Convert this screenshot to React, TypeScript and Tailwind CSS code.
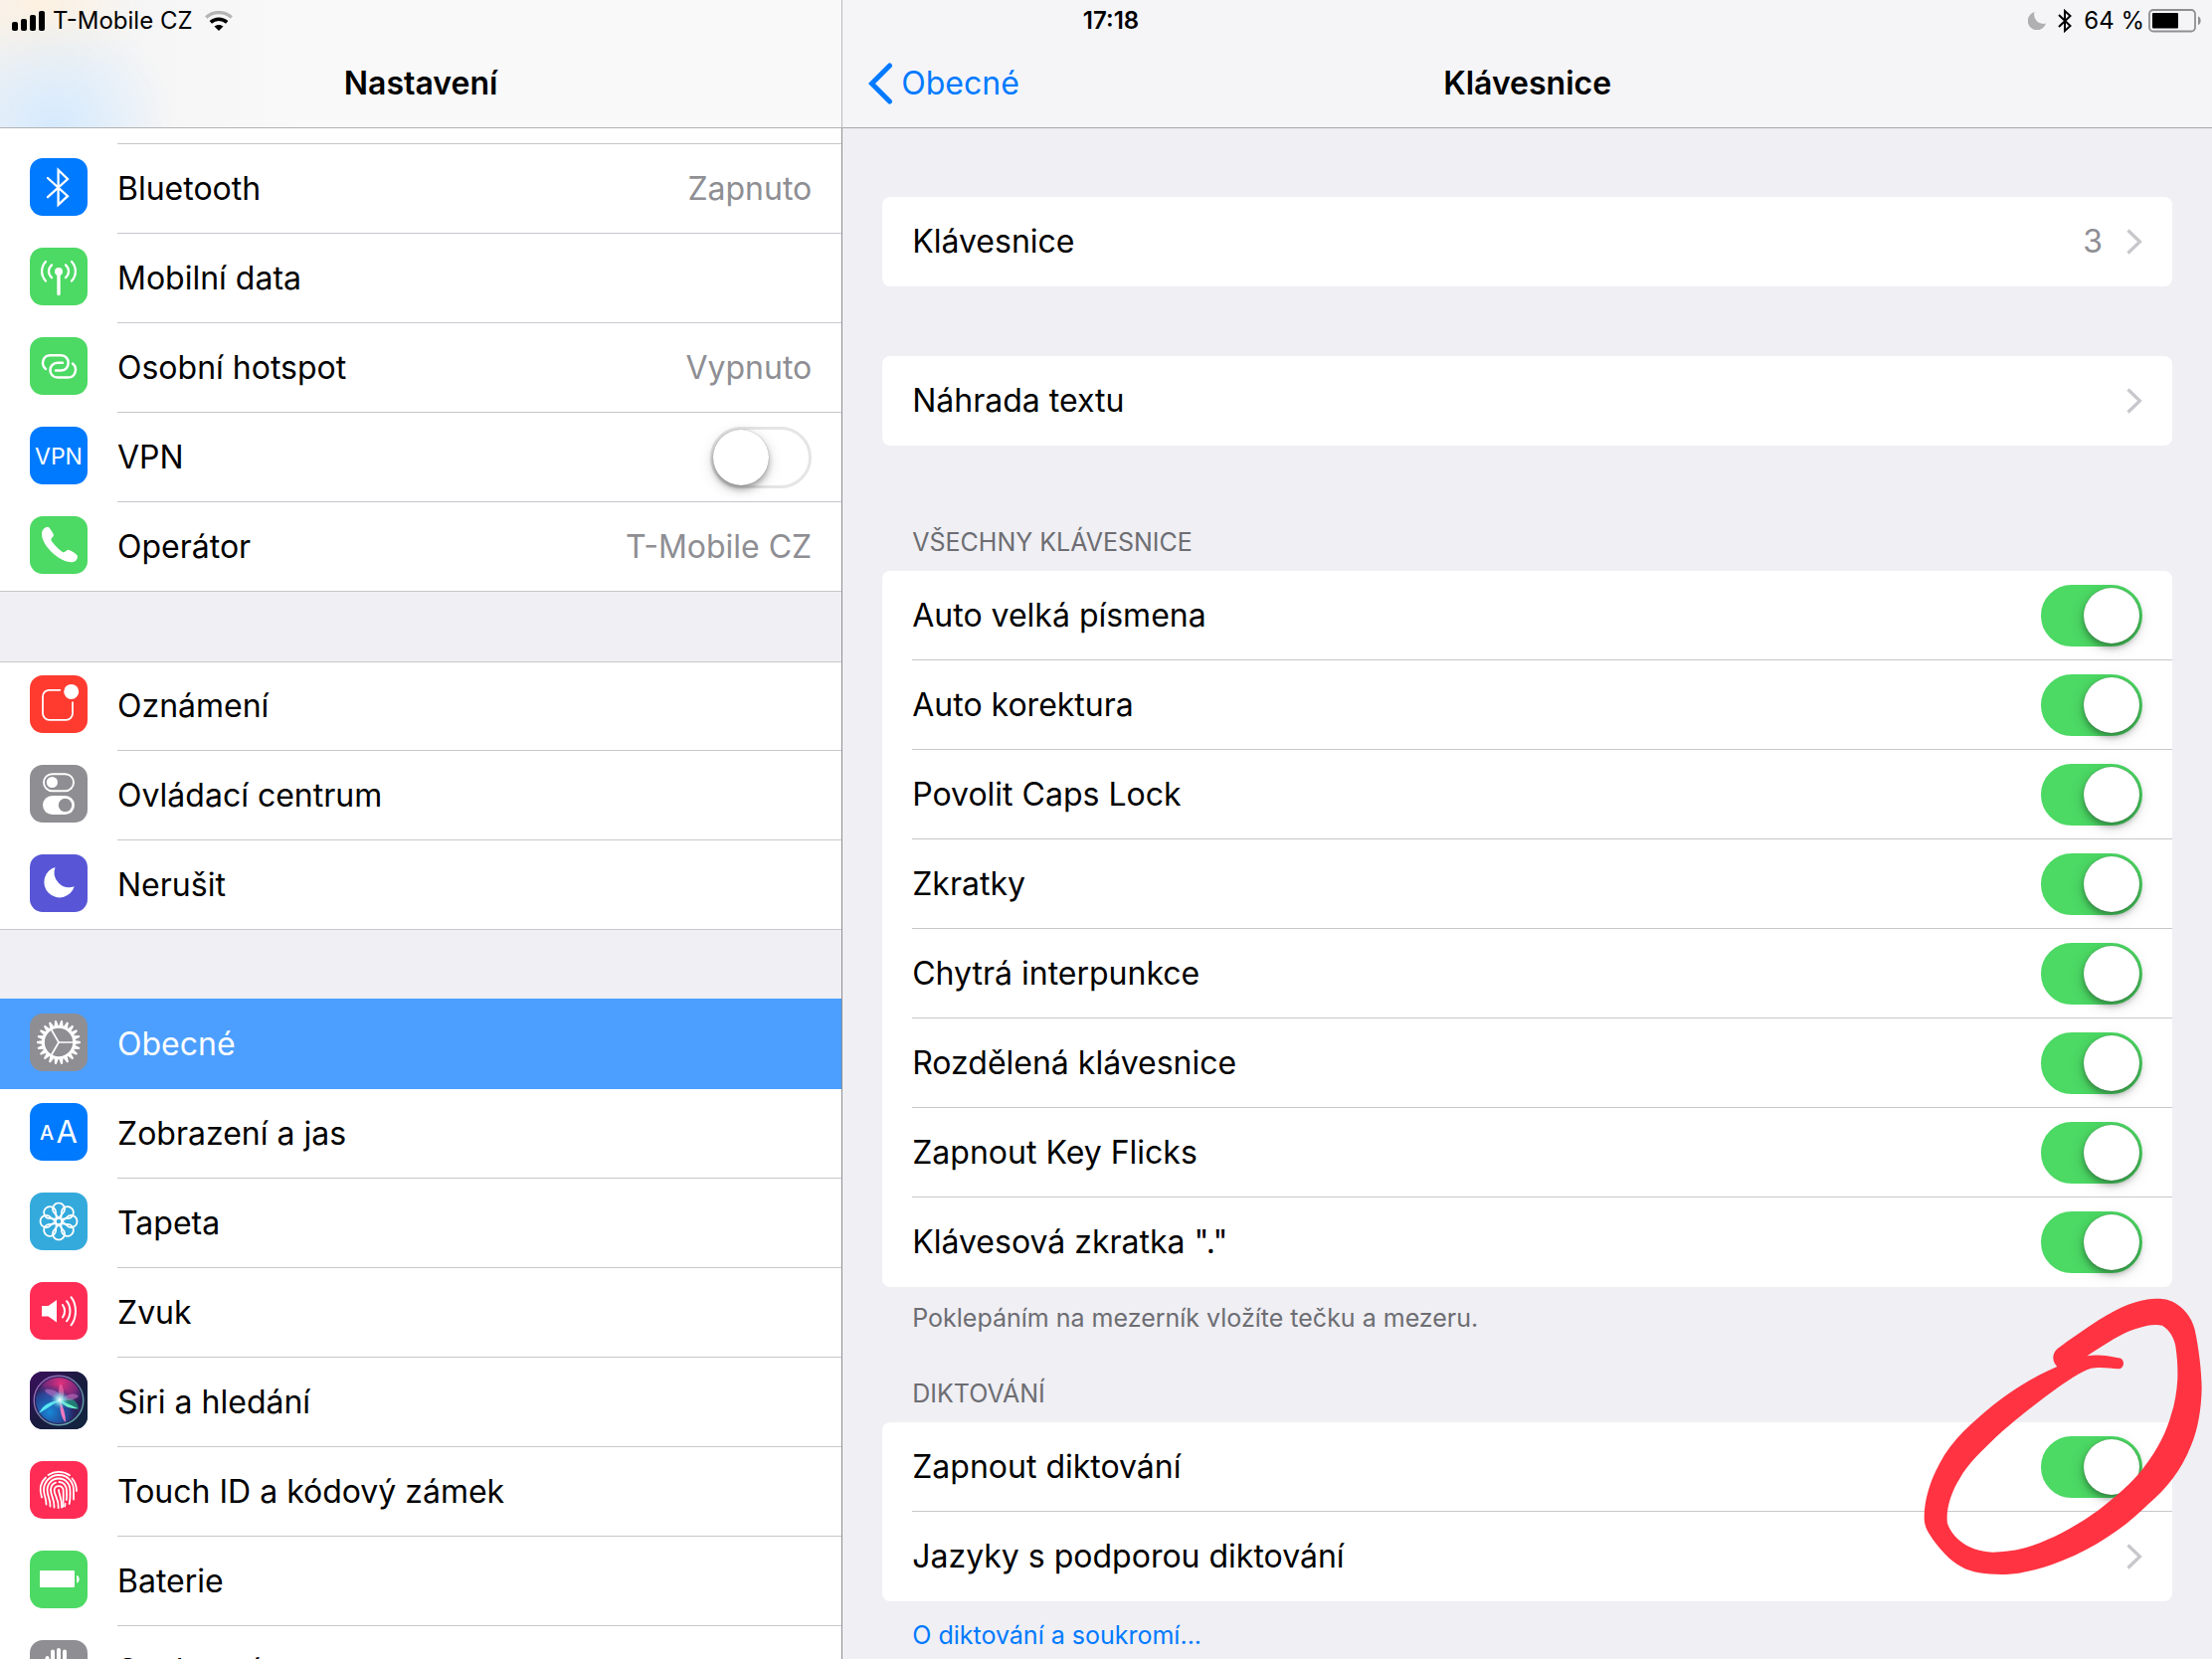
import React from 'react';

interface SidebarItem {
  id: string;
  label: string;
  tile: string;
  icon: React.ReactNode;
  value?: string;
  toggle?: boolean;
  selected?: boolean;
}

interface ToggleItem {
  id: string;
  label: string;
}

const petalAngles = [0, 45, 90, 135, 180, 225, 270, 315];
const gearTeeth = Array.from({ length: 22 }, (_, i) => (i * 360) / 22);

const BluetoothIcon = () => (
  <path d="M18 20 38 38.2 28.6 46.8V12L38 21 18 39.2" fill="none" stroke="white" strokeWidth="2.3" strokeLinecap="round" />
);

const CellularIcon = () => (
  <g fill="none" stroke="white" strokeWidth="2.3" strokeLinecap="round">
    <circle cx="29" cy="24" r="4" fill="white" stroke="none" />
    <path d="M29 25v21.5" strokeWidth="3.4" />
    <path d="M22 17.4c-4 3.8-4 9 0 12.8M36 17.4c4 3.8 4 9 0 12.8" />
    <path d="M16 14c-5.2 5.8-5.2 13.8 0 19.6M42 14c5.2 5.8 5.2 13.8 0 19.6" />
  </g>
);

const HotspotIcon = () => (
  <g fill="none" stroke="white" strokeWidth="2.5" strokeLinecap="round">
    <path d="M16 32C10.600 27.500 13 18.300 20.500 18.300H31.500C41 18.300 41 33.500 31.500 33.500H26" />
    <path d="M43 26.500C48.400 31 46 40.600 38.500 40.600H28C18 40.600 18 25.800 28 25.800H33" />
  </g>
);

const VpnIcon = () => (
  <text x="29" y="38" textAnchor="middle" fontSize="23" fill="white">VPN</text>
);

const PhoneIcon = () => (
  <path
    fill="white"
    d="M12 18c0-4.500 3-7 6.200-7.200 1.300 0 5.800 7 5.800 8.300 0 1.600-2.600 2.700-2.600 4.600 0 2.100 10.500 12.600 12.600 12.600 1.900 0 2.800-2.500 4.500-2.500 1.600 0 9.500 4.600 9.500 6.400 0 3.200-2 6.100-6.300 6.100C30.500 46.300 12 30 12 18Z"
  />
);

const NotificationsIcon = () => (
  <g>
    <path
      d="M31 14.800H19.500a6.500 6.500 0 0 0-6.500 6.500v17a6.500 6.500 0 0 0 6.500 6.500h17a6.500 6.500 0 0 0 6.500-6.500V26.500"
      fill="none"
      stroke="white"
      strokeWidth="1.800"
    />
    <circle cx="41.700" cy="16.400" r="7.500" fill="white" />
  </g>
);

const ControlCenterIcon = () => (
  <g>
    <rect x="14" y="9.200" width="30" height="17" rx="8.500" fill="none" stroke="white" strokeWidth="1.900" />
    <circle cx="22.400" cy="17.500" r="5.600" fill="white" />
    <rect x="13" y="31" width="32" height="19" rx="9.500" fill="white" />
    <circle cx="35.500" cy="40.500" r="6.700" fill="#8e8e93" />
  </g>
);

const MoonIcon = () => (
  <path d="M25.500 13A15.500 15.500 0 1 0 44.700 32.300 15 15 0 0 1 25.500 13Z" fill="white" />
);

const GearIcon = () => (
  <g fill="none" stroke="white">
    <circle cx="29" cy="29" r="15.600" strokeWidth="2.900" />
    <path d="M29 29H44M29 29 21.500 16M29 29 21.500 42" strokeWidth="1.700" />
    {gearTeeth.map((angle) => (
      <path key={angle} d="M45.500 26.900 51 28.100v1.800l-5.500 1.200Z" fill="white" stroke="none" transform={`rotate(${angle} 29 29)`} />
    ))}
  </g>
);

const DisplayIcon = () => (
  <g fill="white">
    <text x="10" y="36.500" fontSize="20" fontWeight="500">A</text>
    <text x="26.500" y="40" fontSize="31">A</text>
  </g>
);

const WallpaperIcon = () => (
  <g fill="none" stroke="white" strokeWidth="1.700" strokeLinejoin="round">
    <circle cx="29" cy="29" r="3.200" />
    {petalAngles.map((angle) => (
      <path key={angle} d="M29 25.800 23.800 19.500A6 6 0 1 1 34.200 19.500Z" transform={`rotate(${angle} 29 29)`} />
    ))}
  </g>
);

const SoundIcon = () => (
  <g>
    <path d="M12 24h6.500l8.500-6v22.500l-8.500-6H12Z" fill="white" />
    <path
      d="M33 23c2.700 3.500 2.700 9 0 12.500M37 19.200c4.600 5.500 4.600 14.600 0 20.100M41.500 15.200c6 7.700 6 20.400 0 28.100"
      fill="none"
      stroke="white"
      strokeWidth="2"
      strokeLinecap="round"
    />
  </g>
);

const SiriIcon = () => (
  <g>
    <defs>
      <linearGradient id="siri-tile" x1="0" y1="0" x2="1" y2="1">
        <stop offset="0" stopColor="#3d0f5c" />
        <stop offset="0.5" stopColor="#191b3f" />
        <stop offset="1" stopColor="#12263f" />
      </linearGradient>
      <linearGradient id="siri-ring" x1="0" y1="0" x2="1" y2="1">
        <stop offset="0" stopColor="#a85ac0" />
        <stop offset="0.5" stopColor="#6f7fa8" />
        <stop offset="1" stopColor="#5cb8b0" />
      </linearGradient>
      <radialGradient id="siri-pink" cx="0.55" cy="0.12" r="0.6">
        <stop offset="0" stopColor="#e0307c" />
        <stop offset="0.6" stopColor="#8f2a86" stopOpacity="0.8" />
        <stop offset="1" stopColor="#3a2370" stopOpacity="0" />
      </radialGradient>
      <radialGradient id="siri-blue" cx="0.3" cy="0.75" r="0.6">
        <stop offset="0" stopColor="#168ad8" />
        <stop offset="0.7" stopColor="#2350a8" stopOpacity="0.7" />
        <stop offset="1" stopColor="#202860" stopOpacity="0" />
      </radialGradient>
      <radialGradient id="siri-glow">
        <stop offset="0" stopColor="#ffffff" />
        <stop offset="0.35" stopColor="#9ff4f4" stopOpacity="0.8" />
        <stop offset="1" stopColor="#40c0e0" stopOpacity="0" />
      </radialGradient>
    </defs>
    <rect width="58" height="58" fill="url(#siri-tile)" />
    <circle cx="29" cy="29" r="24" fill="#2a2158" />
    <circle cx="29" cy="29" r="23" fill="url(#siri-pink)" />
    <circle cx="29" cy="29" r="23" fill="url(#siri-blue)" />
    <path d="M30 28C40 24 48 28 49 38 42 37 34 34 30 28Z" fill="#1e9a7c" opacity="0.75" />
    <path d="M29 28C20 24 13 20 16 18c8-1 14 4 17 8 6-4 14-5 16-1-4 4-12 5-20 3Z" fill="#c77ac8" opacity="0.55" />
    <path d="M31 12c4 6 4 12 1 17-4-4-4-11-1-17Z" fill="#f06aa8" opacity="0.7" />
    <path d="M30 29c4 7 6 14 6 22-4-3-6-12-6-22Z" fill="#f07ac0" />
    <path d="M31 29C24 32 16 38 9 42c4-8 12-13 22-13Z" fill="#58e8f4" />
    <path d="M29 28c6 3 13 6 19 9-7 1-14-2-19-9Z" fill="#6cf0c8" />
    <circle cx="30" cy="28.500" r="9" fill="url(#siri-glow)" />
    <circle cx="29" cy="29" r="24.800" fill="none" stroke="url(#siri-ring)" strokeWidth="1.400" />
  </g>
);

const TouchIdIcon = () => (
  <g fill="none" stroke="white" strokeWidth="1.800" strokeLinecap="round">
    <path d="M18.500 14C25 9.700 33.500 9.700 40 14.200" />
    <path d="M12 36.500C9.500 29 10.500 21.500 16 16.500M42.500 17.500c3 3.500 4.500 8 4.500 12.500" />
    <path d="M16.500 43.500C16.800 38 14 35 14 29c0-8 6.500-15 15-15 9.500 0 15 7.500 15 15.500v9" />
    <path d="M20.500 45.500C21 39 17.500 35.500 17.500 29c0-6.500 5-11.500 11.500-11.500 7 0 11.500 5.500 11.500 12.500 0 4 .5 8-.8 13" />
    <path d="M24.500 46.500c.5-8-3.500-11.500-3.500-17.500 0-3.500 2-6.300 5-7.400M29.500 21c4.500 0 7.500 4 7.500 9 0 3 .3 6-.2 9" />
    <path d="M28.700 47c.6-9-4.200-12.500-4.200-18a4.600 4.600 0 0 1 9.100 0c0 5 .6 11-.6 17" />
    <path d="M29 29c0 4.500 3.500 8 3 17.500M35.500 43l-.4 2.500" />
  </g>
);

const BatteryIcon = () => (
  <g fill="white">
    <rect x="10" y="20" width="35" height="17" rx="1" />
    <path d="M47 25c3.500 0 3.500 7.500 0 7.500Z" />
  </g>
);

const PrivacyIcon = () => (
  <path
    d="M17.500 18v20M23 11.500V34M29 10v24M35 11.500V34M23 34h12v8H23ZM41 30l-5 10"
    fill="none"
    stroke="white"
    strokeWidth="4"
    strokeLinecap="round"
  />
);

const sidebarGroups: SidebarItem[][] = [
  [
    { id: 'bluetooth', label: 'Bluetooth', tile: 'bg-[#007aff]', icon: <BluetoothIcon />, value: 'Zapnuto' },
    { id: 'cellular', label: 'Mobilní data', tile: 'bg-[#4cd964]', icon: <CellularIcon /> },
    { id: 'hotspot', label: 'Osobní hotspot', tile: 'bg-[#4cd964]', icon: <HotspotIcon />, value: 'Vypnuto' },
    { id: 'vpn', label: 'VPN', tile: 'bg-[#007aff]', icon: <VpnIcon />, toggle: true },
    { id: 'carrier', label: 'Operátor', tile: 'bg-[#4cd964]', icon: <PhoneIcon />, value: 'T-Mobile CZ' },
  ],
  [
    { id: 'notifications', label: 'Oznámení', tile: 'bg-[#ff3b30]', icon: <NotificationsIcon /> },
    { id: 'control-center', label: 'Ovládací centrum', tile: 'bg-[#8e8e93]', icon: <ControlCenterIcon /> },
    { id: 'dnd', label: 'Nerušit', tile: 'bg-[#5856d6]', icon: <MoonIcon /> },
  ],
  [
    { id: 'general', label: 'Obecné', tile: 'bg-[#8e8e93]', icon: <GearIcon />, selected: true },
    { id: 'display', label: 'Zobrazení a jas', tile: 'bg-[#007aff]', icon: <DisplayIcon /> },
    { id: 'wallpaper', label: 'Tapeta', tile: 'bg-[#34aadc]', icon: <WallpaperIcon /> },
    { id: 'sound', label: 'Zvuk', tile: 'bg-[#ff2d55]', icon: <SoundIcon /> },
    { id: 'siri', label: 'Siri a hledání', tile: 'bg-[#191b3f]', icon: <SiriIcon /> },
    { id: 'touch-id', label: 'Touch ID a kódový zámek', tile: 'bg-[#ff2d55]', icon: <TouchIdIcon /> },
    { id: 'battery', label: 'Baterie', tile: 'bg-[#4cd964]', icon: <BatteryIcon /> },
    { id: 'privacy', label: 'Soukromí', tile: 'bg-[#8e8e93]', icon: <PrivacyIcon /> },
  ],
];

const keyboardToggles: ToggleItem[] = [
  { id: 'auto-caps', label: 'Auto velká písmena' },
  { id: 'auto-correct', label: 'Auto korektura' },
  { id: 'caps-lock', label: 'Povolit Caps Lock' },
  { id: 'shortcuts', label: 'Zkratky' },
  { id: 'smart-punctuation', label: 'Chytrá interpunkce' },
  { id: 'split-keyboard', label: 'Rozdělená klávesnice' },
  { id: 'key-flicks', label: 'Zapnout Key Flicks' },
  { id: 'dot-shortcut', label: 'Klávesová zkratka "."' },
];

const Switch: React.FC<{ id: string; defaultChecked?: boolean }> = ({ id, defaultChecked }) => (
  <input
    id={id}
    type="checkbox"
    role="switch"
    defaultChecked={defaultChecked}
    className="h-[62px] w-[102px] shrink-0 cursor-pointer appearance-none rounded-full border-[3px] border-[#e5e5e5] bg-white before:block before:size-14 before:rounded-full before:bg-white before:shadow-[0_4px_6px_rgba(0,0,0,0.3),0_4px_16px_rgba(0,0,0,0.15),0_0_1px_rgba(0,0,0,0.4)] before:content-[''] checked:border-[#4cd964] checked:bg-[#4cd964] checked:before:ml-10"
  />
);

const Chevron = () => (
  <svg width="16" height="26" viewBox="0 0 16 26" fill="none" stroke="#c7c7cc" strokeWidth="3.200" aria-hidden="true">
    <path d="M1.500 1.500 13.500 13 1.500 24.500" />
  </svg>
);

const SidebarRow: React.FC<{ item: SidebarItem; last: boolean }> = ({ item, last }) => {
  const content = (
    <>
      <span className={`mt-[14px] block size-[58px] shrink-0 self-start overflow-hidden rounded-[13px] ${item.tile}`}>
        <svg viewBox="0 0 58 58" className="size-full" aria-hidden="true">{item.icon}</svg>
      </span>
      <span
        className={`flex flex-1 items-center justify-between self-stretch pr-[30px] ${
          last || item.selected ? 'border-b border-transparent' : 'border-b border-[#c8c7cc]'
        }`}
      >
        <span>{item.label}</span>
        {item.value && <span className="text-[#8e8e93]">{item.value}</span>}
        {item.toggle && <Switch id={item.id} />}
      </span>
    </>
  );
  const rowClass = `flex h-[90px] w-full items-center gap-[30px] pl-[30px] text-left ${
    item.selected ? 'bg-[#4c9fff] text-white shadow-[0_-1px_0_#4c9fff]' : ''
  }`;

  return (
    <li>
      {item.toggle ? (
        <label htmlFor={item.id} className={rowClass}>{content}</label>
      ) : (
        <button type="button" className={rowClass}>{content}</button>
      )}
    </li>
  );
};

const ToggleRow: React.FC<{ item: ToggleItem; divider: boolean }> = ({ item, divider }) => (
  <li className="pl-[30px]">
    <label
      htmlFor={item.id}
      className={`flex h-[90px] items-center justify-between border-b pr-[30px] ${divider ? 'border-[#c8c7cc]' : 'border-transparent'}`}
    >
      {item.label}
      <Switch id={item.id} defaultChecked />
    </label>
  </li>
);

const LinkRow: React.FC<{ label: string; value?: string }> = ({ label, value }) => (
  <button type="button" className="flex h-[90px] w-full items-center justify-between px-[30px] text-left">
    <span>{label}</span>
    <span className="flex items-center gap-6 text-[#8e8e93]">
      {value}
      <Chevron />
    </span>
  </button>
);

const StatusBar = () => (
  <div className="absolute inset-x-0 top-0 z-10 grid h-[42px] grid-cols-[1fr_auto_1fr] items-center pr-[10px] pl-3 text-2xl">
    <div className="flex items-center gap-2">
      <svg width="33" height="20" viewBox="0 0 33 20" aria-hidden="true">
        <rect x="0" y="11" width="6" height="9" rx="2" />
        <rect x="9" y="8" width="6" height="12" rx="2" />
        <rect x="18" y="4" width="6" height="16" rx="2" />
        <rect x="27" y="0" width="6" height="20" rx="2" />
      </svg>
      <span>T-Mobile CZ</span>
      <svg width="28" height="20" viewBox="0 0 28 20" className="ml-1" fill="none" aria-hidden="true">
        <path d="M1.200 6.500C8.500 0 19.500 0 26.800 6.500" stroke="#b5b5b5" strokeWidth="3.400" />
        <path d="M5.800 11.300C10.500 7.200 17.500 7.200 22.200 11.300" stroke="black" strokeWidth="3.600" />
        <path d="M9.500 15.600C12 13.300 16 13.300 18.500 15.600L14 20Z" fill="black" />
      </svg>
    </div>
    <span className="pl-2 font-semibold">17:18</span>
    <div className="flex items-center justify-end">
      <svg width="18" height="18" viewBox="0 0 18 18" className="mr-3" aria-hidden="true">
        <path d="M6.500 0A9.300 9.300 0 1 0 18 11.500 9.300 9.300 0 0 1 6.500 0Z" fill="#b0b0b2" />
      </svg>
      <svg width="14" height="24" viewBox="0 0 14 24" className="mr-3" fill="none" stroke="black" strokeWidth="2" aria-hidden="true">
        <path d="M1 6 12.500 17 7 22V2L12.500 7 1 18" />
      </svg>
      <span className="mr-1">64 %</span>
      <svg width="54" height="24" viewBox="0 0 54 24" aria-hidden="true">
        <rect x="1" y="1" width="46" height="21.500" rx="4" fill="none" stroke="#8f8f91" strokeWidth="1.800" />
        <rect x="4" y="4" width="26" height="15.500" rx="1" />
        <path d="M50 7.500c3.500 1 3.500 7.500 0 8.500Z" fill="#8f8f91" />
      </svg>
    </div>
  </div>
);

// Hand-drawn marker loop around the dictation switch
const MarkerLoop = () => (
  <svg
    viewBox="0 0 972 1194"
    className="pointer-events-none absolute -right-10 -top-40 h-[398px] w-[324px]"
    aria-hidden="true"
  >
    <path
      fill="#ff3341"
      fillRule="evenodd"
      d="M505 312C490 298 488 275 505 259C545 228 585 202 630 172C695 130 750 109 800 107C822 107 835 108 850 115C885 132 910 162 920 200C932 255 940 320 941 375C940 440 930 500 909 550C880 625 835 680 780 727C695 810 600 870 490 909C430 930 380 939 335 939C290 938 245 934 215 915C180 897 150 860 130 833C110 805 104 790 104 765C104 715 122 655 150 605C190 530 250 480 310 430C370 382 435 342 505 312ZM595 280C660 238 700 212 740 199C775 187 800 183 822 188C845 202 857 225 862 250C868 290 869 320 868 350C866 385 860 425 848 460C836 505 810 560 765 618C730 665 680 705 630 745C570 788 500 828 430 852C390 865 350 871 310 872C270 870 235 858 212 838C190 818 180 802 174 785C168 745 185 690 212 648C235 605 280 565 320 525C370 478 440 425 490 388C530 358 580 325 605 318C630 312 660 316 690 319C710 317 710 287 690 286C655 278 625 275 595 280Z"
    />
  </svg>
);

export default function App() {
  return (
    <div className="relative grid h-screen grid-cols-[8fr_13fr] overflow-hidden bg-[#efeff4] font-[Inter,sans-serif] text-[32px] leading-10 text-black">
      <StatusBar />

      <aside className="flex min-h-0 min-w-0 flex-col">
        <header className="flex h-[129px] shrink-0 items-center justify-center border-r border-b border-r-[#b9b9bd] border-b-[#b2b2b2] bg-[#f9f9f9] bg-[radial-gradient(circle_at_55px_128px,#d5eafe_0,#d5eafe00_120px),radial-gradient(circle_at_40px_0px,#fdf1e1_0,#fdf1e100_100px),linear-gradient(90deg,#f2f2f2_0,#f9f9f9_300px)] pt-10">
          <h1 className="font-semibold">Nastavení</h1>
        </header>
        <nav className="min-h-0 flex-1 overflow-hidden border-r border-[#8e8e93]">
          <div className="h-4 bg-white pl-[118px]">
            <div className="h-4 border-b border-[#c8c7cc]" />
          </div>
          {sidebarGroups.map((group, index) => (
            <ul
              key={group[0].id}
              className={`bg-white ${index > 0 ? 'mt-[70px] shadow-[inset_0_1px_0_#c8c7cc]' : ''} ${
                index < sidebarGroups.length - 1 ? 'bg-[linear-gradient(#c8c7cc,#c8c7cc)] bg-[length:100%_1px] bg-bottom bg-no-repeat' : ''
              }`}
            >
              {group.map((item, i) => (
                <SidebarRow key={item.id} item={item} last={i === group.length - 1} />
              ))}
            </ul>
          ))}
        </nav>
      </aside>

      <main className="flex min-h-0 min-w-0 flex-col">
        <header className="grid h-[129px] shrink-0 grid-cols-[1fr_auto_1fr] items-center border-b border-[#a7a7ab] bg-[#f5f5f8] px-[26px] pt-10">
          <button type="button" className="flex items-center gap-2 text-[#007aff]">
            <svg width="25" height="42" viewBox="0 0 25 42" fill="none" stroke="#007aff" strokeWidth="5" strokeLinecap="round" strokeLinejoin="miter" aria-hidden="true">
              <path d="M21.500 3 3.500 21l18 18" />
            </svg>
            Obecné
          </button>
          <h2 className="font-semibold">Klávesnice</h2>
        </header>

        <div className="min-h-0 flex-1 overflow-hidden px-10 pt-[69px]">
          <div className="rounded-lg bg-white">
            <LinkRow label="Klávesnice" value="3" />
          </div>
          <div className="mt-[70px] rounded-lg bg-white">
            <LinkRow label="Náhrada textu" />
          </div>

          <section className="mt-[81px]">
            <h3 className="pb-[13px] pl-[30px] text-[25px] leading-8 text-[#6d6d72]">VŠECHNY KLÁVESNICE</h3>
            <ul className="rounded-lg bg-white">
              {keyboardToggles.map((item, i) => (
                <ToggleRow key={item.id} item={item} divider={i < keyboardToggles.length - 1} />
              ))}
            </ul>
            <p className="pt-[15px] pl-[30px] text-[25px] leading-8 text-[#6d6d72]">Poklepáním na mezerník vložíte tečku a mezeru.</p>
          </section>

          <section className="mt-11">
            <h3 className="pb-[13px] pl-[30px] text-[25px] leading-8 text-[#6d6d72]">DIKTOVÁNÍ</h3>
            <div className="relative">
              <ul className="rounded-lg bg-white">
                <ToggleRow item={{ id: 'dictation', label: 'Zapnout diktování' }} divider />
                <li>
                  <LinkRow label="Jazyky s podporou diktování" />
                </li>
              </ul>
              <MarkerLoop />
            </div>
            <p className="pt-[18px] pl-[30px] text-[25px] leading-8">
              <a href="#privacy" className="text-[#007aff]">O diktování a soukromí...</a>
            </p>
          </section>
        </div>
      </main>
    </div>
  );
}
